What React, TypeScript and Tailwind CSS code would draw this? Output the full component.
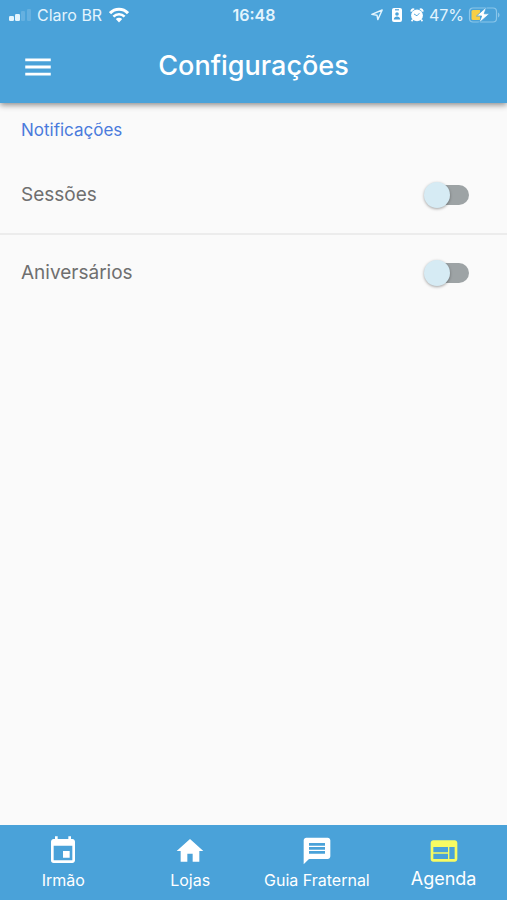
import React, { useState } from 'react';
import { MdEvent, MdHome, MdMenu, MdMessage, MdWeb } from 'react-icons/md';

const navItems = [
  { label: 'Irmão', icon: MdEvent },
  { label: 'Lojas', icon: MdHome },
  { label: 'Guia Fraternal', icon: MdMessage },
  { label: 'Agenda', icon: MdWeb },
];

const SignalIcon = () => (
  <svg className="h-3 w-6" viewBox="0 0 24 12" fill="currentColor" aria-hidden="true">
    <rect x="1" y="7" width="5" height="5" rx="1.2" />
    <rect x="7" y="5" width="5" height="7" rx="1.2" />
    <rect x="13" y="2" width="4" height="10" rx="1.2" opacity="0.18" />
    <rect x="19" y="0" width="4" height="12" rx="1.2" opacity="0.18" />
  </svg>
);

const WifiIcon = () => (
  <svg className="h-4 w-5" viewBox="0 0 20 16" fill="none" stroke="currentColor" strokeWidth="3" aria-hidden="true">
    <path d="M1 6.2C6 1 14 1 19 6.2" />
    <path d="M4.4 9.6c3.2-3.2 8-3.2 11.2 0" strokeWidth="2.6" />
    <path d="M10 15.4 6.8 12c1.8-1.8 4.6-1.8 6.4 0z" fill="currentColor" stroke="none" />
  </svg>
);

const LocationIcon = () => (
  <svg className="size-3" viewBox="0 0 12 12" fill="none" stroke="currentColor" strokeWidth="1.4" strokeLinejoin="round" aria-hidden="true">
    <path d="M11.2 1 6.8 10.6 6 6.2.8 5.4z" />
  </svg>
);

const LockBadgeIcon = () => (
  <svg className="h-4 w-3" viewBox="0 0 12 16" aria-hidden="true">
    <rect x="1" y="1" width="10" height="14" rx="2" fill="currentColor" />
    <path d="M4 2.8h4" stroke="#4aa2d9" strokeWidth="1.2" />
    <circle cx="6" cy="7" r="1.8" fill="#4aa2d9" />
    <path d="M2.8 12.5c0-4 6.4-4 6.4 0z" fill="#4aa2d9" />
  </svg>
);

const AlarmIcon = () => (
  <svg className="size-4" viewBox="0 0 16 16" aria-hidden="true">
    <path d="M1.8 5.2a2.6 2.6 0 0 1 4-3.2zM14.2 5.2a2.6 2.6 0 0 0-4-3.2z" fill="currentColor" />
    <path d="m3.8 12.6-1.2 1.6M12.2 12.6l1.2 1.6" stroke="currentColor" strokeWidth="1.6" />
    <circle cx="8" cy="8.4" r="5.9" fill="currentColor" />
    <path d="m5 7 3 1.8 2.4-2.6" fill="none" stroke="#4aa2d9" strokeWidth="0.9" />
  </svg>
);

const BatteryIcon = () => (
  <svg className="h-4 w-8" viewBox="0 0 32 16" aria-hidden="true">
    <rect x="1.5" y="1" width="27" height="14" rx="3.5" fill="none" stroke="#8ac6ea" strokeWidth="1.2" />
    <path d="M30 5.5c2 .8 2 4.2 0 5z" fill="#8ac6ea" />
    <path d="M5 3h7v10H5a1.5 1.5 0 0 1-1.5-1.5v-7A1.5 1.5 0 0 1 5 3z" fill="#f7cf46" />
    <path d="M18.5 0 8.5 9h5.2L11 16 21.5 6.8h-5.3z" fill="#fff" stroke="#4aa2d9" strokeWidth="0.8" />
  </svg>
);

const StatusBar = () => (
  <div className="grid h-[30px] grid-cols-[1fr_auto_1fr] items-center pr-[7px] pl-2 text-base text-[#e3f4fd]">
    <div className="flex items-center gap-[5px]">
      <SignalIcon />
      <span>Claro BR</span>
      <span className="pl-[2px] text-white"><WifiIcon /></span>
    </div>
    <span className="font-semibold">16:48</span>
    <div className="flex items-center justify-end gap-1">
      <LocationIcon />
      <span className="flex items-center gap-[6px] pl-1 text-white">
        <LockBadgeIcon />
        <AlarmIcon />
      </span>
      <span>47%</span>
      <BatteryIcon />
    </div>
  </div>
);

interface SettingRowProps {
  id: string;
  label: string;
  divider?: boolean;
}

const SettingRow: React.FC<SettingRowProps> = ({ id, label, divider }) => {
  const [enabled, setEnabled] = useState(false);

  return (
    <div className={`box-content flex h-19 items-center justify-between pr-[38px] pl-[21px] ${divider ? 'border-b-2 border-[#ececec]' : ''}`}>
      <label htmlFor={id} className="text-[19px] text-[#6f6f6f]">{label}</label>
      <span className="relative flex h-[26px] w-[45px] items-center justify-end">
        <input
          id={id}
          type="checkbox"
          role="switch"
          checked={enabled}
          onChange={(e) => setEnabled(e.target.checked)}
          className="peer h-5 w-10 cursor-pointer appearance-none rounded-full bg-[#9da3a5] checked:bg-[#92c7e8]"
        />
        <span className="pointer-events-none absolute top-0 left-0 size-[26px] rounded-full bg-[#d6ebf4] shadow-[0_1px_3px_rgba(0,0,0,0.35)] transition-transform peer-checked:translate-x-5" />
      </span>
    </div>
  );
};

const App: React.FC = () => {
  const [active, setActive] = useState('Agenda');

  return (
    <div className="flex min-h-screen flex-col bg-[#fafafa] font-['Inter','Liberation_Sans',sans-serif]">
      <header className="relative bg-[#4aa2d9] text-white shadow-[0_2px_6px_rgba(0,0,0,0.45)]">
        <StatusBar />
        <div className="grid h-[73px] grid-cols-[56px_1fr_56px] items-center px-[10px]">
          <button type="button" aria-label="Menu" className="flex size-14 items-center justify-center">
            <MdMenu className="size-[34px]" />
          </button>
          <h1 className="text-center text-[27px] font-medium">Configurações</h1>
        </div>
      </header>

      <main className="flex-1">
        <h2 className="px-[21px] py-[14px] text-[17px] leading-[26px] text-[#4a7bdc]">Notificações</h2>
        <SettingRow id="sessoes" label="Sessões" divider />
        <SettingRow id="aniversarios" label="Aniversários" />
      </main>

      <nav className="grid h-[75px] grid-cols-4 bg-[#4aa2d9] text-white">
        {navItems.map(({ label, icon: Icon }) => {
          const isActive = label === active;
          return (
            <button
              key={label}
              type="button"
              aria-current={isActive ? 'page' : undefined}
              onClick={() => setActive(label)}
              className="flex flex-col items-center pt-[10px] whitespace-nowrap"
            >
              <Icon className={`size-8 ${isActive ? 'text-[#f7fb62]' : ''}`} />
              <span className={isActive ? 'text-lg leading-6' : 'text-base leading-[26px]'}>{label}</span>
            </button>
          );
        })}
      </nav>
    </div>
  );
};

export default App;
